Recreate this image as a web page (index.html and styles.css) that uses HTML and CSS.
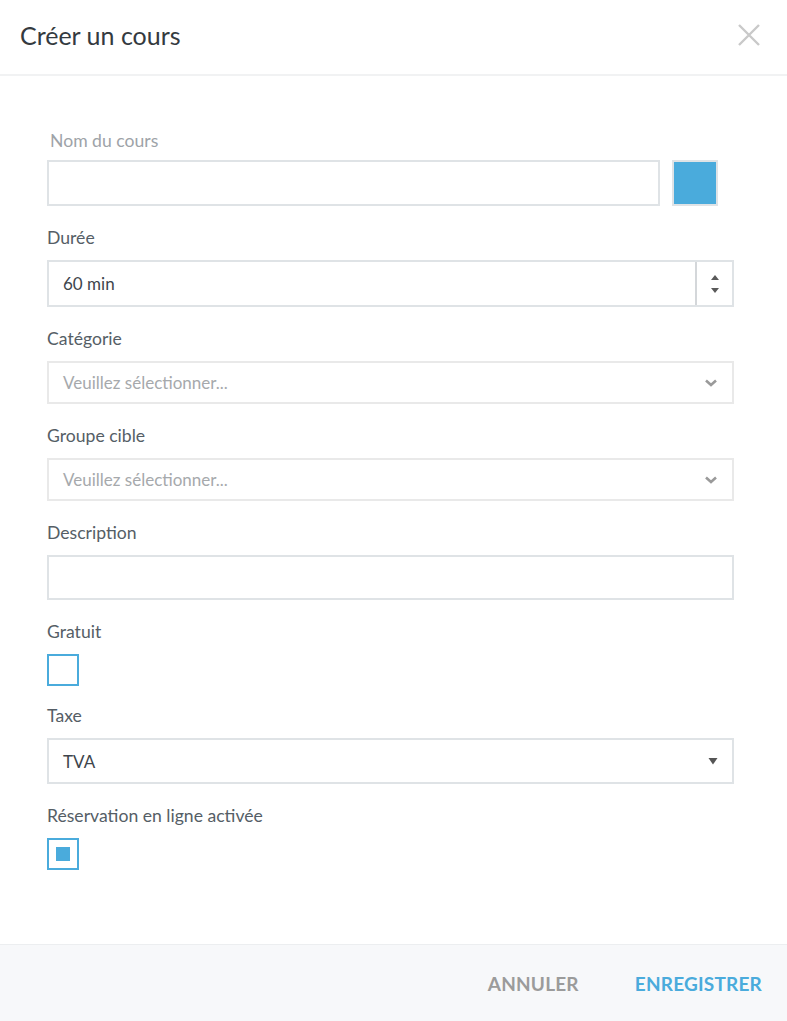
FILE: index.html
```html
<!DOCTYPE html>
<html lang="fr">
<head>
    <meta charset="UTF-8">
    <meta name="viewport" content="width=device-width, initial-scale=1.0">
    <title>Créer un cours</title>
    <link rel="stylesheet" href="styles.css">
</head>
<body>
    <div class="modal">
        <div class="modal-header">
            <h1>Créer un cours</h1>
            <button class="close-btn" aria-label="Fermer">
                <svg width="24" height="24" viewBox="0 0 24 24">
                    <path d="M2 2 L22 22 M22 2 L2 22" stroke="#c9c9c9" stroke-width="2.4" fill="none"/>
                </svg>
            </button>
        </div>

        <form class="modal-body">
            <div class="field">
                <label class="label-muted" for="name">Nom du cours</label>
                <div class="name-row">
                    <input type="text" id="name" class="input">
                    <span class="color-swatch"></span>
                </div>
            </div>

            <div class="field">
                <label for="duration">Durée</label>
                <div class="input number-input">
                    <span class="value">60 min</span>
                    <span class="spinner">
                        <svg width="10" height="22" viewBox="0 0 10 22">
                            <path d="M1 7 L5 2 L9 7 Z M1 15 L9 15 L5 20 Z" fill="#5a5a5a"/>
                        </svg>
                    </span>
                </div>
            </div>

            <div class="field">
                <label>Catégorie</label>
                <div class="select">
                    <span class="placeholder">Veuillez sélectionner...</span>
                    <svg class="chevron" width="14" height="10" viewBox="0 0 14 10">
                        <path d="M2 2.5 L7 7 L12 2.5" stroke="#9a9a9a" stroke-width="2.6" fill="none"/>
                    </svg>
                </div>
            </div>

            <div class="field">
                <label>Groupe cible</label>
                <div class="select">
                    <span class="placeholder">Veuillez sélectionner...</span>
                    <svg class="chevron" width="14" height="10" viewBox="0 0 14 10">
                        <path d="M2 2.5 L7 7 L12 2.5" stroke="#9a9a9a" stroke-width="2.6" fill="none"/>
                    </svg>
                </div>
            </div>

            <div class="field">
                <label for="description">Description</label>
                <input type="text" id="description" class="input input-short">
            </div>

            <div class="field field-check">
                <label>Gratuit</label>
                <span class="checkbox"></span>
            </div>

            <div class="field">
                <label>Taxe</label>
                <div class="input native-select">
                    <span class="value">TVA</span>
                    <svg width="10" height="8" viewBox="0 0 10 8">
                        <path d="M0.5 1 L9.5 1 L5 7.5 Z" fill="#555"/>
                    </svg>
                </div>
            </div>

            <div class="field field-check">
                <label>Réservation en ligne activée</label>
                <span class="checkbox checked"></span>
            </div>
        </form>

        <div class="modal-footer">
            <button class="btn btn-cancel">ANNULER</button>
            <button class="btn btn-save">ENREGISTRER</button>
        </div>
    </div>
</body>
</html>
```

FILE: styles.css
```css
body {
    font-family: Lato, 'Liberation Sans', sans-serif;
    margin: 0;
    padding: 0;
    background: #fff;
    color: #555e66;
}
.modal {
    width: 787px;
    height: 1021px;
    display: flex;
    flex-direction: column;
    background: #fff;
}
.modal-header {
    display: flex;
    align-items: center;
    justify-content: space-between;
    padding: 0 26px 4px 20px;
    border-bottom: 2px solid #f1f2f3;
    box-sizing: border-box;
    height: 76px;
}
h1 {
    margin: 0;
    font-size: 25px;
    font-weight: 400;
    color: #343a40;
}
.close-btn {
    background: none;
    border: 0;
    padding: 0;
    width: 24px;
    height: 24px;
    cursor: pointer;
}
.close-btn svg {
    display: block;
}
.modal-body {
    flex: 1;
    padding: 53px 53px 0 47px;
}
.field {
    margin-bottom: 20px;
}
.field-check {
    margin-bottom: 18px;
}
label {
    display: block;
    font-size: 17.6px;
    line-height: 24px;
    margin-bottom: 10px;
    color: #555e66;
}
.label-muted {
    color: #9ea3a8;
    padding-left: 3px;
    margin-bottom: 7px;
}
.name-row {
    display: flex;
    gap: 12px;
    margin-right: 16px;
}
.input {
    display: flex;
    align-items: center;
    width: 100%;
    height: 46px;
    border: 2px solid #dfe3e6;
    box-sizing: border-box;
    background: #fff;
    font-family: inherit;
    font-size: 17px;
    color: #3e454c;
    padding: 0 14px;
    outline: none;
}
.input-short {
    height: 45px;
}
.name-row .input {
    flex: 1;
    width: auto;
}
.color-swatch {
    width: 46px;
    height: 46px;
    box-sizing: border-box;
    border: 2px solid #dfe3e6;
    background: #4aabdc;
}
.number-input {
    height: 47px;
    padding-right: 0;
}
.number-input .value {
    flex: 1;
}
.spinner {
    width: 35px;
    height: 100%;
    border-left: 2px solid #d4d7da;
    display: flex;
    align-items: center;
    justify-content: center;
}
.select {
    display: flex;
    align-items: center;
    height: 43px;
    border: 2px solid #e9e9e9;
    box-sizing: border-box;
    padding: 0 14px;
}
.placeholder {
    flex: 1;
    font-size: 17px;
    color: #a6a9ac;
}
.native-select .value {
    flex: 1;
}
.checkbox {
    display: flex;
    align-items: center;
    justify-content: center;
    width: 32px;
    height: 32px;
    box-sizing: border-box;
    border: 2px solid #4aabdc;
    background: #fff;
}
.checkbox.checked::after {
    content: '';
    width: 14px;
    height: 14px;
    background: #4aabdc;
}
.modal-footer {
    height: 76px;
    border-top: 1px solid #eceef0;
    background: #f7f8fa;
    display: flex;
    justify-content: flex-end;
    align-items: center;
    gap: 56px;
    padding: 0 25px 0 0;
}
.btn {
    background: none;
    border: 0;
    padding: 0;
    font-family: inherit;
    font-size: 19px;
    font-weight: 700;
    letter-spacing: 0.2px;
    cursor: pointer;
}
.btn-cancel {
    color: #9b9b9b;
}
.btn-save {
    color: #4aabdc;
}
```
